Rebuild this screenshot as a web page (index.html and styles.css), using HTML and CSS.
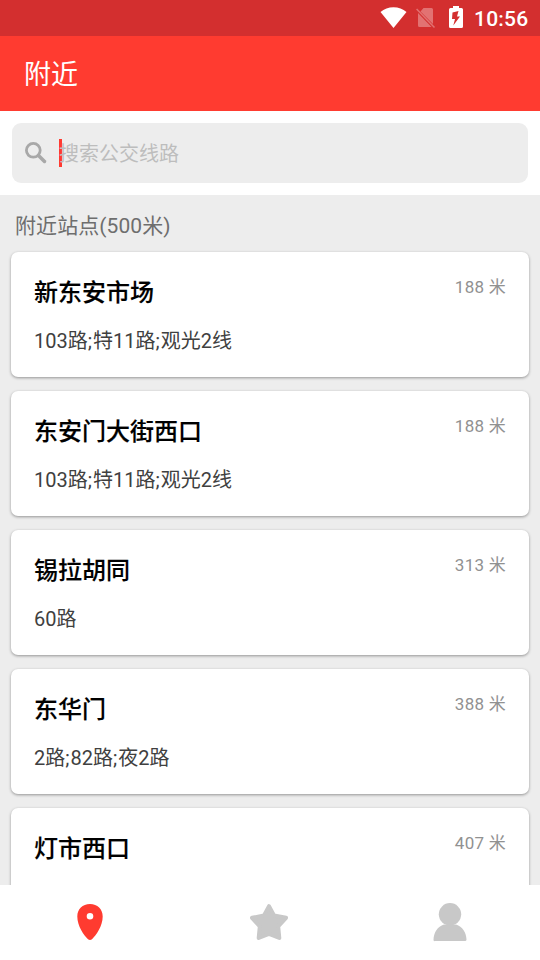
FILE: index.html
```html
<!DOCTYPE html>
<html lang="zh-CN">
<head>
<meta charset="utf-8">
<title>附近</title>
<link rel="stylesheet" href="styles.css">
</head>
<body>
<div class="app">
  <div class="status">
    <svg class="wifi" width="27" height="22" viewBox="0 0 27 22"><path d="M.5 5Q6 .3 13.500.3T26.500 5L13.500 21Z" fill="#fff"/></svg>
    <svg class="sim" width="20" height="22" viewBox="0 0 20 22"><path d="M7.500 1H15.500Q17 1 17 2.500V17L4.500 4.500ZM2 6 15.500 20H3.500Q2 20 2 18.500Z" fill="#e27272"/><path d="M.6 2 18.500 20.500" stroke="#e27272" stroke-width="1.500"/></svg>
    <svg class="battery" width="14" height="22" viewBox="0 0 14 22"><path d="M4 0H10V2H12.500Q14 2 14 3.500V20.500Q14 22 12.500 22H1.500Q0 22 0 20.500V3.500Q0 2 1.500 2H4Z" fill="#fff"/><path d="M9.500 5 3.500 6.500 3 13H6L4.300 19.500 11 10.500H8Z" fill="#d32f2f"/></svg>
    <span class="clock">10:56</span>
  </div>
  <header class="bar">附近</header>
  <div class="search-wrap">
    <div class="search">
      <svg width="22" height="22" viewBox="0 0 22 22" fill="none" stroke="#a8a8a8"><circle cx="8.300" cy="8.300" r="6.900" stroke-width="2.800"/><path d="M13.500 13.500 19.500 19.500" stroke-width="3.500" stroke-linecap="round"/></svg>
      <span class="field"><i class="caret"></i>搜索公交线路</span>
    </div>
  </div>
  <main class="content">
    <h2 class="section">附近站点(500米)</h2>
    <div class="card"><div class="top"><h3>新东安市场</h3><span class="distance">188 米</span></div><p>103路<b>;</b>特11路<b>;</b>观光2线</p></div>
    <div class="card"><div class="top"><h3>东安门大街西口</h3><span class="distance">188 米</span></div><p>103路<b>;</b>特11路<b>;</b>观光2线</p></div>
    <div class="card"><div class="top"><h3>锡拉胡同</h3><span class="distance">313 米</span></div><p>60路</p></div>
    <div class="card"><div class="top"><h3>东华门</h3><span class="distance">388 米</span></div><p>2路<b>;</b>82路<b>;</b>夜2路</p></div>
    <div class="card"><div class="top"><h3>灯市西口</h3><span class="distance">407 米</span></div></div>
  </main>
  <nav class="tabs">
    <a><svg width="40" height="40" viewBox="0 0 40 40"><path fill="#ff3b30" fill-rule="evenodd" d="M20 2C12.500 2 7.300 7 7.300 14.500C7.300 24 14 33.500 18 37.200Q20 38.800 22 37.200C26 33.500 32.700 24 32.700 14.500C32.700 7 27.500 2 20 2ZM20 11A3.300 3.300 0 1 1 20 17.600A3.300 3.300 0 1 1 20 11Z"/></svg></a>
    <a><svg width="40" height="40" viewBox="0 0 40 40"><path fill="#c8c8c8" stroke="#c8c8c8" stroke-width="4" stroke-linejoin="round" d="M19 4.200 24 13.500 36 15.800 28.200 24.500 29.300 36 19 32 8.700 36 9.800 24.500 2 15.800 14 13.500Z"/></svg></a>
    <a><svg width="40" height="40" viewBox="0 0 40 40"><g fill="#c8c8c8"><circle cx="20" cy="12.300" r="11.200"/><path d="M14 22.500Q20 23.700 26 22.500C32.500 24.500 36.300 30.500 36.500 37.500Q36.500 39 35 39H5Q3.500 39.500 3.500 38C3.700 30.500 7.500 24.500 14 22.500Z"/></g></svg></a>
  </nav>
</div>
</body>
</html>
```
FILE: styles.css
```css
* { box-sizing: border-box; }
body { margin: 0; font-family: Roboto, "Noto Sans CJK SC", sans-serif; }
h2, h3, p { margin: 0; font-weight: 400; }
svg { display: block; flex: none; }
.app { width: 540px; height: 960px; display: flex; flex-direction: column; overflow: hidden; background: #fff; }
.status { flex: none; height: 36px; background: #d32f2f; display: flex; padding: 6px 12px 0 380px; color: #fff; }
.wifi { margin-top: 1px; }
.sim { margin: 1px 0 0 9px; }
.battery { margin-left: 13px; }
.clock { margin-left: 11px; font-size: 21px; line-height: 27px; letter-spacing: .2px; font-weight: 500; white-space: nowrap; }
.bar { flex: none; height: 75px; background: #ff3b30; color: #fff; font-size: 27px; line-height: 79px; padding-left: 24px; }
.search-wrap { flex: none; height: 84px; padding: 12px; }
.search { height: 60px; border-radius: 9px; background: #ededed; display: flex; align-items: center; padding-left: 13px; }
.field { position: relative; z-index: 0; margin-left: 12px; font-size: 20px; height: 28px; line-height: 30px; color: #bdbdbd; }
.caret { position: absolute; left: 0; top: 0; width: 3px; height: 28px; background: #ff3b30; z-index: -1; }
.content { flex: 1; min-height: 0; overflow: hidden; background: #ededed; padding: 0 11px; }
.section { height: 57px; line-height: 63px; padding-left: 4px; font-size: 21px; letter-spacing: .08px; color: #6e6e6e; }
.card { height: 125px; margin-bottom: 14px; padding: 23px 23px 0; background: #fff; border-radius: 7px; box-shadow: 0 1px 3px rgba(0,0,0,.38); }
.top { display: flex; justify-content: space-between; }
h3 { font-size: 24px; height: 35px; line-height: 37px; color: #000; font-weight: 500; -webkit-text-stroke: .15px #000; }
.distance { font-size: 17px; line-height: 25px; letter-spacing: .25px; color: #919191; }
.card p { margin-top: 16px; font-size: 20px; line-height: 30px; color: #404040; }
.card p b { font-weight: 400; margin-right: 1px; }
.tabs { flex: none; height: 75px; display: grid; grid-template-columns: repeat(3, 1fr); background: #fff; padding-top: 17px; justify-items: center; }
```
